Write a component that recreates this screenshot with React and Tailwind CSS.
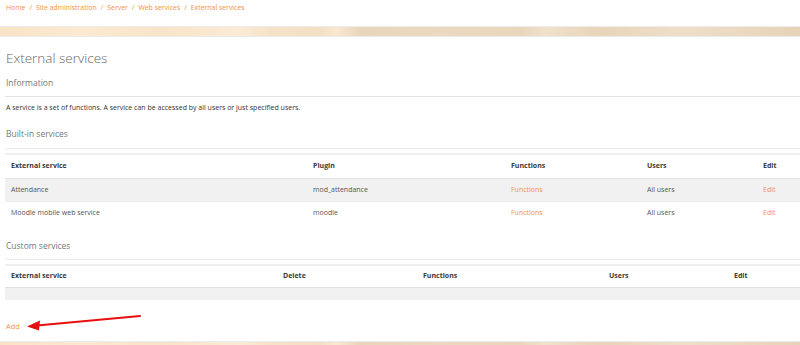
import React from "react";

const font = { fontFamily: '"Open Sans", "Noto Sans", sans-serif' };

function Band({ className = "" }) {
  return (
    <div
      className={`w-full border-y border-[#ececec] ${className}`}
      style={{
        background:
          "linear-gradient(90deg,#f9e3c6 0%,#fbe9d2 10%,#f8e4c8 20%,#fbebd6 30%,#f5e2c8 34%,#f2dfc4 40%,#f9e9d2 42%,#e8d6bb 45%,#ead9c0 55%,#e9d7bc 65%,#f0e1cb 68%,#e7d4b9 75%,#efdfc9 85%,#e6d3b8 100%)",
      }}
    />
  );
}

function HeaderCell({ children, w }) {
  return (
    <div className={`${w} pl-[6px] font-bold text-[#3a3a3a]`}>{children}</div>
  );
}

const crumbs = ["Home", "Site administration", "Server", "Web services", "External services"];

export default function App() {
  const orange = "text-[#f6913f]";
  return (
    <div className="w-[800px] h-[345px] overflow-hidden bg-white text-[#555]" style={font}>
      <div className={`flex pl-[6px] pt-[2px] h-[26px] text-[6.9px] leading-[12px] ${orange}`}>
        {crumbs.map((c, i) => (
          <React.Fragment key={c}>
            {i > 0 && <span className="px-[4px]">/</span>}
            <span>{c}</span>
          </React.Fragment>
        ))}
      </div>
      <Band className="h-[11px]" />
      <div className="pl-[5px]">
        <div className="pl-[1px] pt-[11px] text-[13.5px] leading-[20px] font-light text-[#666]">
          External services
        </div>
        <div className="pl-[1px] pt-[9px] text-[8.5px] leading-[12px] text-[#777]">Information</div>
        <div className="mt-[7px] border-t border-[#e4e4e4]" />
        <div className="pl-[1px] pt-[6px] text-[7px] leading-[10px] text-[#333]">
          A service is a set of functions. A service can be accessed by all users or just specified users.
        </div>
        <div className="pl-[1px] pt-[15px] text-[8.5px] leading-[12px] text-[#777]">Built-in services</div>

        <div className="mt-[8px] border-t border-[#ececec]" />
        <div className="mt-[4px] border-t-2 border-[#f0f0f0] text-[7px]">
          <div className="flex h-[24px] items-center border-b border-[#e3e3e3]">
            <HeaderCell w="w-[302px]">External service</HeaderCell>
            <HeaderCell w="w-[198px]">Plugin</HeaderCell>
            <HeaderCell w="w-[136px]">Functions</HeaderCell>
            <HeaderCell w="w-[116px]">Users</HeaderCell>
            <HeaderCell w="flex-1">Edit</HeaderCell>
          </div>
          <div className="flex h-[23px] items-center bg-[#f1f1f1] border-b border-[#ececec]">
            <div className="w-[302px] pl-[6px]">Attendance</div>
            <div className="w-[198px] pl-[6px]">mod_attendance</div>
            <div className={`w-[136px] pl-[6px] ${orange}`}>Functions</div>
            <div className="w-[116px] pl-[6px]">All users</div>
            <div className={`flex-1 pl-[6px] ${orange}`}>Edit</div>
          </div>
          <div className="flex h-[23px] items-center">
            <div className="w-[302px] pl-[6px]">Moodle mobile web service</div>
            <div className="w-[198px] pl-[6px]">moodle</div>
            <div className={`w-[136px] pl-[6px] ${orange}`}>Functions</div>
            <div className="w-[116px] pl-[6px]">All users</div>
            <div className={`flex-1 pl-[6px] ${orange}`}>Edit</div>
          </div>
        </div>

        <div className="pl-[1px] pt-[15px] text-[8.5px] leading-[12px] text-[#777]">Custom services</div>
        <div className="mt-[7px] border-t border-[#ececec]" />
        <div className="mt-[4px] border-t-2 border-[#f0f0f0] text-[7px]">
          <div className="flex h-[22px] items-center border-b border-[#e0e0e0]">
            <HeaderCell w="w-[272px]">External service</HeaderCell>
            <HeaderCell w="w-[140px]">Delete</HeaderCell>
            <HeaderCell w="w-[186px]">Functions</HeaderCell>
            <HeaderCell w="w-[125px]">Users</HeaderCell>
            <HeaderCell w="flex-1">Edit</HeaderCell>
          </div>
          <div className="h-[12px] bg-[#f1f1f1]" />
        </div>

        <div className="relative h-[41px]">
          <div className={`absolute left-[1px] top-[21px] text-[7.5px] leading-[10px] ${orange}`}>Add</div>
          <svg className="absolute left-0 top-0" width="160" height="41" viewBox="0 0 160 41">
            <line x1="135" y1="16" x2="32" y2="25.5" stroke="#e8100f" strokeWidth="2" strokeLinecap="round" />
            <polygon points="22,26.5 35,20.5 34,30.5" fill="#e8100f" />
          </svg>
        </div>
      </div>
      <Band className="h-[10px]" />
    </div>
  );
}
